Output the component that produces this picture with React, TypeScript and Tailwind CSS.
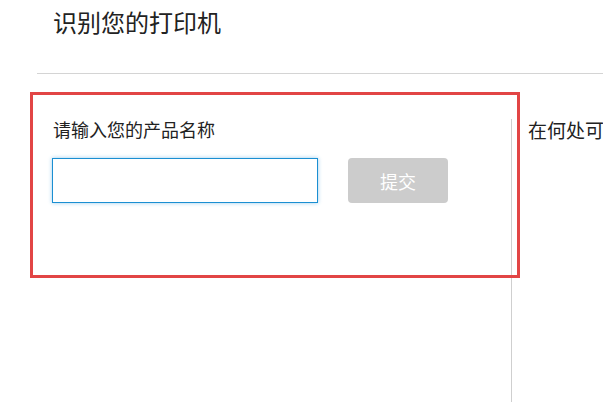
import React from "react"

const font = { fontFamily: '"Noto Sans CJK SC", "Noto Sans", sans-serif' }

const App = () => {
    return (
        <div
            className="relative w-[603px] h-[402px] overflow-hidden bg-white text-[#222] flex flex-col"
            style={font}
        >
            <div className="h-[73px] pl-[53px] pt-[6px]">
                <h1 className="text-[24px] leading-[32px] font-normal">识别您的打印机</h1>
            </div>
            <div className="ml-[37px] border-t border-[#d4d4d4]" />

            <div className="flex flex-1 ml-[37px] mt-[45px]">
                <div className="w-[475px] shrink-0 border-r border-[#cfcfcf] pl-[15px]">
                    <p className="text-[18px] leading-[20px] pl-[1px]">请输入您的产品名称</p>
                    <div className="flex items-center gap-[30px] mt-[19px]">
                        <input
                            type="text"
                            className="w-[266px] h-[45px] border border-[#1b8fd2] shadow-[0_0_4px_rgba(30,144,214,0.45)] outline-none px-2 text-[16px]"
                        />
                        <button
                            type="button"
                            className="w-[100px] h-[45px] rounded-[4px] bg-[#cccccc] text-white text-[18px] leading-none"
                        >
                            提交
                        </button>
                    </div>
                </div>
                <div className="pl-[16px] whitespace-nowrap">
                    <p className="text-[19px] leading-[22px]">在何处可以找到产品名称？</p>
                </div>
            </div>

            {/* highlight overlay */}
            <div className="absolute left-[30px] top-[92px] w-[490px] h-[186px] border-[3px] border-[#e24545] pointer-events-none" />
        </div>
    )
}

export default App
